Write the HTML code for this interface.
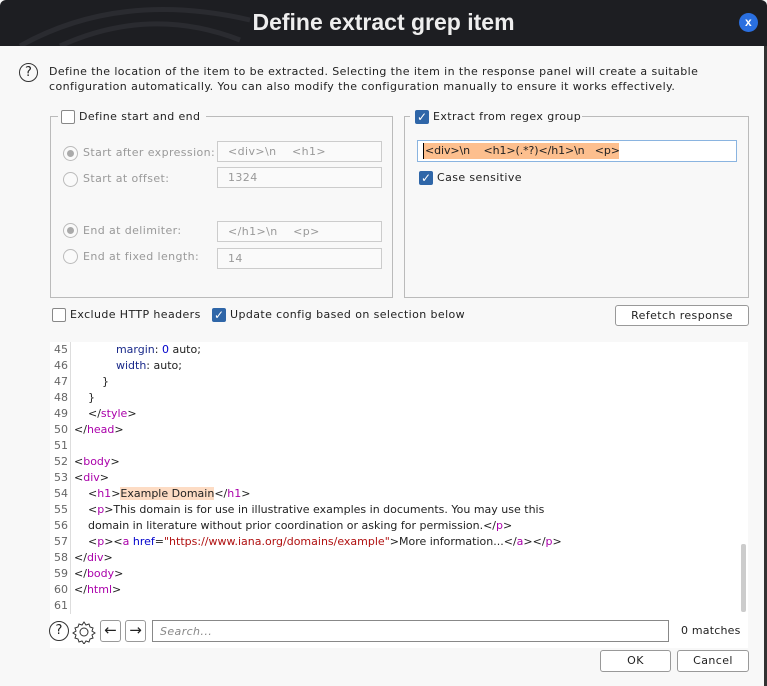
<!DOCTYPE html>
<html><head><style>
*{box-sizing:border-box;margin:0;padding:0}
body{width:767px;height:686px;background:#f8f8f8;font-family:"DejaVu Sans","Liberation Sans",sans-serif;font-size:11px;color:#222;position:relative;overflow:hidden;letter-spacing:0.4px}
.abs{position:absolute;white-space:nowrap}
.title{left:0;top:0;width:767px;height:46px;background:#1d1e22;border-radius:6px 6px 0 0}
.title h1{position:absolute;left:0;width:767px;top:9px;text-align:center;color:#eee;font:bold 23px "Liberation Sans",sans-serif;letter-spacing:0}
.grp{border:1px solid #bbb}
.cb{width:14px;height:14px;border:1px solid #888;background:#fff;border-radius:2px}
.cbc{width:14px;height:14px;background:#2f66a8;border-radius:2px;color:#fff;font-size:12px;line-height:14px;text-align:center;letter-spacing:0}
.rad{width:15px;height:15px;border:1px solid #bbb;border-radius:50%;background:#fafafa}
.rad.on::after{content:"";position:absolute;left:3px;top:3px;width:7px;height:7px;border-radius:50%;background:#aaa}
.inp{border:1px solid #ccc;background:#fafafa;color:#999;padding:3px 10px;height:21px;font-size:11px}
.lbl{color:#999}
.btn{border:1px solid #999;border-radius:3px;background:#fff;text-align:center;line-height:19px;font-size:11px}
.ed{left:50px;top:342px;width:698px;height:272px;background:#fff;letter-spacing:0}
.ln{position:absolute;left:0;width:18px;text-align:right;color:#666;font-size:11px}
.cd{position:absolute;left:24px;white-space:pre;font-size:11px;color:#222}
.t{color:#a0a}.k{color:#1a2a8a}.n{color:#00c}.s{color:#b01010}
</style></head><body>
<div class="abs title">
<svg class="abs" style="left:0;top:0" width="300" height="46"><path d="M20 46 Q120 -10 250 20 M60 46 Q150 5 240 40" stroke="#2a2b30" stroke-width="5" fill="none"/></svg>
<h1>Define extract grep item</h1>
<div class="abs" style="left:739px;top:13px;width:19px;height:19px;border-radius:50%;background:#2a6fe0;color:#fff;font:bold 12px sans-serif;text-align:center;line-height:19px">x</div></div>
<div class="abs" style="left:764px;top:46px;width:3px;height:640px;background:#333"></div>
<div class="abs" style="left:19px;top:63px;width:19px;height:19px;border:1px solid #333;border-radius:50%;text-align:center;line-height:17px;font-size:13px;letter-spacing:0">?</div>
<div class="abs" style="left:49px;top:64px;line-height:15px">Define the location of the item to be extracted. Selecting the item in the response panel will create a suitable<br>configuration automatically. You can also modify the configuration manually to ensure it works effectively.</div>

<div class="abs grp" style="left:50px;top:116px;width:343px;height:182px"></div>
<div class="abs" style="left:58px;top:108px;width:148px;height:16px;background:#f8f8f8"></div>
<div class="abs cb" style="left:61px;top:110px"></div>
<div class="abs" style="left:79px;top:110px">Define start and end</div>
<div class="abs rad on" style="left:63px;top:146px"></div><div class="abs lbl" style="left:83px;top:146px">Start after expression:</div>
<div class="abs inp" style="left:217px;top:141px;width:165px">&lt;div&gt;\n&nbsp;&nbsp;&nbsp;&nbsp;&lt;h1&gt;</div>
<div class="abs rad" style="left:63px;top:172px"></div><div class="abs lbl" style="left:83px;top:172px">Start at offset:</div>
<div class="abs inp" style="left:217px;top:167px;width:165px">1324</div>
<div class="abs rad on" style="left:63px;top:223px"></div><div class="abs lbl" style="left:83px;top:224px">End at delimiter:</div>
<div class="abs inp" style="left:217px;top:221px;width:165px">&lt;/h1&gt;\n&nbsp;&nbsp;&nbsp;&nbsp;&lt;p&gt;</div>
<div class="abs rad" style="left:63px;top:249px"></div><div class="abs lbl" style="left:83px;top:250px">End at fixed length:</div>
<div class="abs inp" style="left:217px;top:248px;width:165px">14</div>

<div class="abs grp" style="left:404px;top:116px;width:345px;height:182px"></div>
<div class="abs" style="left:410px;top:108px;width:172px;height:16px;background:#f8f8f8"></div>
<div class="abs cbc" style="left:415px;top:110px">✓</div>
<div class="abs" style="left:433px;top:110px">Extract from regex group</div>
<div class="abs" style="left:417px;top:140px;width:320px;height:22px;border:1px solid #8ab4e0;background:#fff"></div>
<div class="abs" style="left:423px;top:143px;width:196px;height:16px;background:#fdbf8e;padding-left:1px;line-height:16px;border-left:1px solid #000;overflow:hidden;letter-spacing:-0.1px">&lt;div&gt;\n&nbsp;&nbsp;&nbsp;&nbsp;&lt;h1&gt;(.*?)&lt;/h1&gt;\n&nbsp;&nbsp;&nbsp;&lt;p&gt;</div>
<div class="abs cbc" style="left:419px;top:171px">✓</div>
<div class="abs" style="left:437px;top:171px">Case sensitive</div>

<div class="abs cb" style="left:52px;top:308px"></div><div class="abs" style="left:70px;top:308px">Exclude HTTP headers</div>
<div class="abs cbc" style="left:212px;top:308px">✓</div><div class="abs" style="left:230px;top:308px">Update config based on selection below</div>
<div class="abs btn" style="left:615px;top:305px;width:134px;height:21px">Refetch response</div>

<div class="abs ed">
<div class="abs" style="left:20px;top:0;width:1px;height:272px;background:#ddd"></div>
<div class="abs" style="left:691px;top:202px;width:5px;height:68px;background:#ccc;border-radius:2px"></div>
<div class="ln" style="top:1px">45</div><div class="cd" style="top:1px">            <span class="k">margin</span>: <span class="n">0</span> auto;</div>
<div class="ln" style="top:17px">46</div><div class="cd" style="top:17px">            <span class="k">width</span>: auto;</div>
<div class="ln" style="top:33px">47</div><div class="cd" style="top:33px">        }</div>
<div class="ln" style="top:49px">48</div><div class="cd" style="top:49px">    }</div>
<div class="ln" style="top:65px">49</div><div class="cd" style="top:65px">    &lt;/<span class="t">style</span>&gt;</div>
<div class="ln" style="top:81px">50</div><div class="cd" style="top:81px">&lt;/<span class="t">head</span>&gt;</div>
<div class="ln" style="top:97px">51</div>
<div class="ln" style="top:113px">52</div><div class="cd" style="top:113px">&lt;<span class="t">body</span>&gt;</div>
<div class="ln" style="top:129px">53</div><div class="cd" style="top:129px">&lt;<span class="t">div</span>&gt;</div>
<div class="ln" style="top:145px">54</div><div class="cd" style="top:145px">    &lt;<span class="t">h1</span>&gt;<span style="background:#fddcc4">Example Domain</span>&lt;/<span class="t">h1</span>&gt;</div>
<div class="ln" style="top:161px">55</div><div class="cd" style="top:161px">    &lt;<span class="t">p</span>&gt;This domain is for use in illustrative examples in documents. You may use this</div>
<div class="ln" style="top:177px">56</div><div class="cd" style="top:177px">    domain in literature without prior coordination or asking for permission.&lt;/<span class="t">p</span>&gt;</div>
<div class="ln" style="top:193px">57</div><div class="cd" style="top:193px">    &lt;<span class="t">p</span>&gt;&lt;<span class="t">a</span> <span class="n">href</span>=<span class="s">"https://www.iana.org/domains/example"</span>&gt;More information...&lt;/<span class="t">a</span>&gt;&lt;/<span class="t">p</span>&gt;</div>
<div class="ln" style="top:209px">58</div><div class="cd" style="top:209px">&lt;/<span class="t">div</span>&gt;</div>
<div class="ln" style="top:225px">59</div><div class="cd" style="top:225px">&lt;/<span class="t">body</span>&gt;</div>
<div class="ln" style="top:241px">60</div><div class="cd" style="top:241px">&lt;/<span class="t">html</span>&gt;</div>
<div class="ln" style="top:257px">61</div>
</div>
<div class="abs" style="left:50px;top:614px;width:698px;height:34px;background:#fff"></div>
<div class="abs" style="left:49px;top:621px;width:20px;height:20px;border:1px solid #333;border-radius:50%;text-align:center;line-height:18px;font-size:13px;background:#fff;letter-spacing:0">?</div>
<svg class="abs" style="left:72px;top:620px" width="24" height="24" viewBox="0 0 24 24"><path d="M12 2l2 3 3-1 1 3 3 1-1 3 3 2-3 2 1 3-3 1-1 3-3-1-2 3-2-3-3 1-1-3-3-1 1-3-3-2 3-2-1-3 3-1 1-3 3 1z" fill="none" stroke="#333"/><circle cx="12" cy="12" r="4" fill="none" stroke="#333"/></svg>
<div class="abs btn" style="left:100px;top:620px;width:21px;height:22px;font-size:15px;line-height:19px;letter-spacing:0">←</div>
<div class="abs btn" style="left:125px;top:620px;width:21px;height:22px;font-size:15px;line-height:19px;letter-spacing:0">→</div>
<div class="abs" style="left:152px;top:620px;width:517px;height:22px;border:1px solid #888;background:#fff;color:#888;font-style:italic;padding:4px 7px">Search...</div>
<div class="abs" style="left:681px;top:624px;letter-spacing:0.2px">0 matches</div>
<div class="abs btn" style="left:600px;top:650px;width:71px;height:22px">OK</div>
<div class="abs btn" style="left:677px;top:650px;width:72px;height:22px">Cancel</div>
</body></html>
